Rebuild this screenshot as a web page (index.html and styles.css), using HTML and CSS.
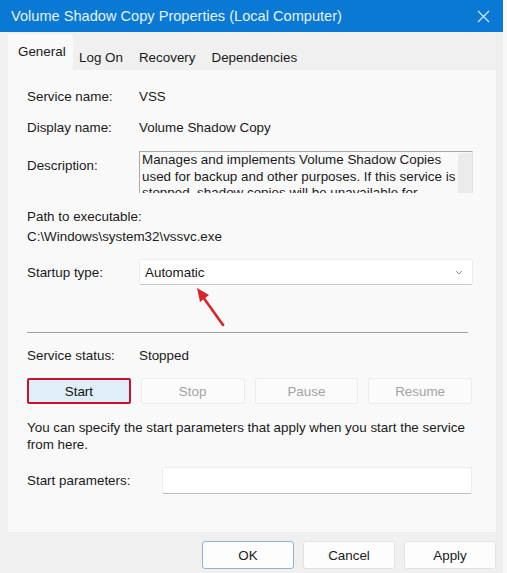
FILE: index.html
```html
<!DOCTYPE html>
<html>
<head>
<meta charset="utf-8">
<link rel="stylesheet" href="styles.css">
</head>
<body>
<div class="window">
  <div class="titlebar">
    <span class="title">Volume Shadow Copy Properties (Local Computer)</span>
    <svg class="close" width="13" height="13" viewBox="0 0 13 13"><path d="M1 1 L12 12 M12 1 L1 12" stroke="#cfe6fb" stroke-width="1.3" fill="none"/></svg>
  </div>
  <div class="tabs">
    <div class="tab active">General</div>
    <div class="tab">Log On</div>
    <div class="tab">Recovery</div>
    <div class="tab">Dependencies</div>
  </div>
  <div class="panel">
    <div class="row r-name"><span class="label">Service name:</span><span>VSS</span></div>
    <div class="row r-display"><span class="label">Display name:</span><span>Volume Shadow Copy</span></div>
    <div class="row r-desc">
      <span class="label desc-label">Description:</span>
      <div class="descbox">
        <div class="desctext">Manages and implements Volume Shadow Copies used for backup and other purposes. If this service is stopped, shadow copies will be unavailable for backup and the backup may fail.</div>
        <div class="scroll"></div>
      </div>
    </div>
    <div class="line r-path">Path to executable:</div>
    <div class="line r-pathval">C:\Windows\system32\vssvc.exe</div>
    <div class="row r-startup">
      <span class="label">Startup type:</span>
      <div class="select">
        <span>Automatic</span>
        <svg class="chev" width="8" height="5" viewBox="0 0 8 5"><path d="M1 1 L4 4 L7 1" stroke="#9a9a9a" stroke-width="1" fill="none"/></svg>
      </div>
    </div>
    <div class="arrowzone">
      <svg class="arrow" width="40" height="44" viewBox="0 0 40 44">
        <path d="M34 40 L14 12" stroke="#d8232a" stroke-width="2.6" stroke-linecap="round" fill="none"/>
        <path d="M8 3 L20 10 L11 17 Z" fill="#d8232a"/>
      </svg>
    </div>
    <div class="sep"></div>
    <div class="row r-status"><span class="label">Service status:</span><span>Stopped</span></div>
    <div class="buttons">
      <div class="btn start">Start</div>
      <div class="btn disabled">Stop</div>
      <div class="btn disabled">Pause</div>
      <div class="btn disabled">Resume</div>
    </div>
    <div class="info">You can specify the start parameters that apply when you start the service from here.</div>
    <div class="row r-params">
      <span class="label params-label">Start parameters:</span>
      <div class="input"></div>
    </div>
  </div>
  <div class="footer">
    <div class="fbtn ok">OK</div>
    <div class="fbtn">Cancel</div>
    <div class="fbtn">Apply</div>
  </div>
</div>
</body>
</html>
```
FILE: styles.css
```css
* { box-sizing: border-box; }
html, body { margin: 0; padding: 0; }
body {
  font-family: "Liberation Sans", Arial, sans-serif;
  font-size: 13.4px;
  color: #1a1a1a;
  background: #f8f8f8;
}
.window {
  width: 503px;
  height: 573px;
  background: #f0f0f0;
  display: flex;
  flex-direction: column;
}
.titlebar {
  height: 32px;
  background: #0a79d3;
  display: flex;
  align-items: center;
  justify-content: space-between;
  padding: 0 13px 0 11px;
  flex: none;
}
.title {
  color: #e4f2ff;
  font-size: 14.6px;
}
.tabs {
  height: 38px;
  display: flex;
  align-items: flex-end;
  padding-left: 8px;
  flex: none;
}
.tab {
  height: 34px;
  padding: 0 8px;
  display: flex;
  align-items: center;
  padding-top: 8px;
  color: #1a1a1a;
}
.tab.active {
  background: #f9f9f9;
  width: 65px;
  padding: 0 0 2px 10px;
  height: 36px;
}
.tab:nth-child(2) { padding-left: 6px; padding-right: 8px; }
.tab:nth-child(3) { padding-left: 8px; padding-right: 8px; }
.tab:nth-child(4) { padding-left: 8px; }
.panel {
  margin: 0 7px 0 8px;
  height: 462px;
  background: #f9f9f9;
  padding: 18px 0 0 19px;
  flex: none;
  position: relative;
}
.row { display: flex; align-items: center; line-height: 17px; }
.label { width: 112px; flex: none; }
.line { line-height: 17px; }
.r-display { margin-top: 14px; }
.r-desc { margin-top: 15px; align-items: flex-start; }
.desc-label { margin-top: 6px; }
.descbox {
  width: 334px;
  height: 42px;
  border-top: 1px solid #a9a9a9;
  border-left: 1px solid #a9a9a9;
  border-right: 1px solid #e2e2e2;
  display: flex;
  overflow: hidden;
  background: #f9f9f9;
}
.desctext {
  width: 318px;
  padding: 0 0 0 2px;
  line-height: 16.5px;
  flex: none;
}
.scroll {
  flex: 1;
  background: #ebebeb;
  margin-top: 1px;
}
.r-path { margin-top: 15px; }
.r-pathval { margin-top: 3px; }
.r-startup { margin-top: 14px; }
.select {
  width: 334px;
  height: 26px;
  background: #ffffff;
  border: 1px solid #ececec;
  border-bottom: 1px solid #c9c9c9;
  border-radius: 2px;
  display: flex;
  align-items: center;
  justify-content: space-between;
  padding: 0 9px 0 5px;
}
.arrowzone {
  height: 47px;
  position: relative;
}
.arrow {
  position: absolute;
  left: 162px;
  top: 0;
}
.sep {
  width: 441px;
  height: 1px;
  background: #a0a0a0;
}
.r-status { margin-top: 14px; }
.buttons {
  margin-top: 14px;
  display: flex;
  gap: 10px;
  width: 445px;
}
.btn {
  width: 104px;
  height: 26px;
  display: flex;
  align-items: center;
  justify-content: center;
  border: 1px solid #ececec;
  background: #fbfbfb;
  border-radius: 2px;
}
.btn.disabled { color: #a3a3a3; }
.btn.start {
  background: #e0eef9;
  border: 2px solid #c8112c;
  color: #111;
}
.info {
  margin-top: 15px;
  line-height: 17px;
  width: 450px;
}
.r-params { margin-top: 14px; }
.params-label { width: 135px; }
.input {
  width: 310px;
  height: 27px;
  background: #fff;
  border: 1px solid #ededed;
  border-bottom: 1px solid #bfbfbf;
  border-radius: 2px;
}
.footer {
  display: flex;
  justify-content: flex-end;
  gap: 9px;
  padding: 9px 7px 0 0;
}
.fbtn {
  width: 92px;
  height: 28px;
  display: flex;
  align-items: center;
  justify-content: center;
  background: #fdfdfd;
  border: 1px solid #e3e3e3;
  border-radius: 3px;
}
.fbtn.ok { border-color: #8fb1cf; }
```
